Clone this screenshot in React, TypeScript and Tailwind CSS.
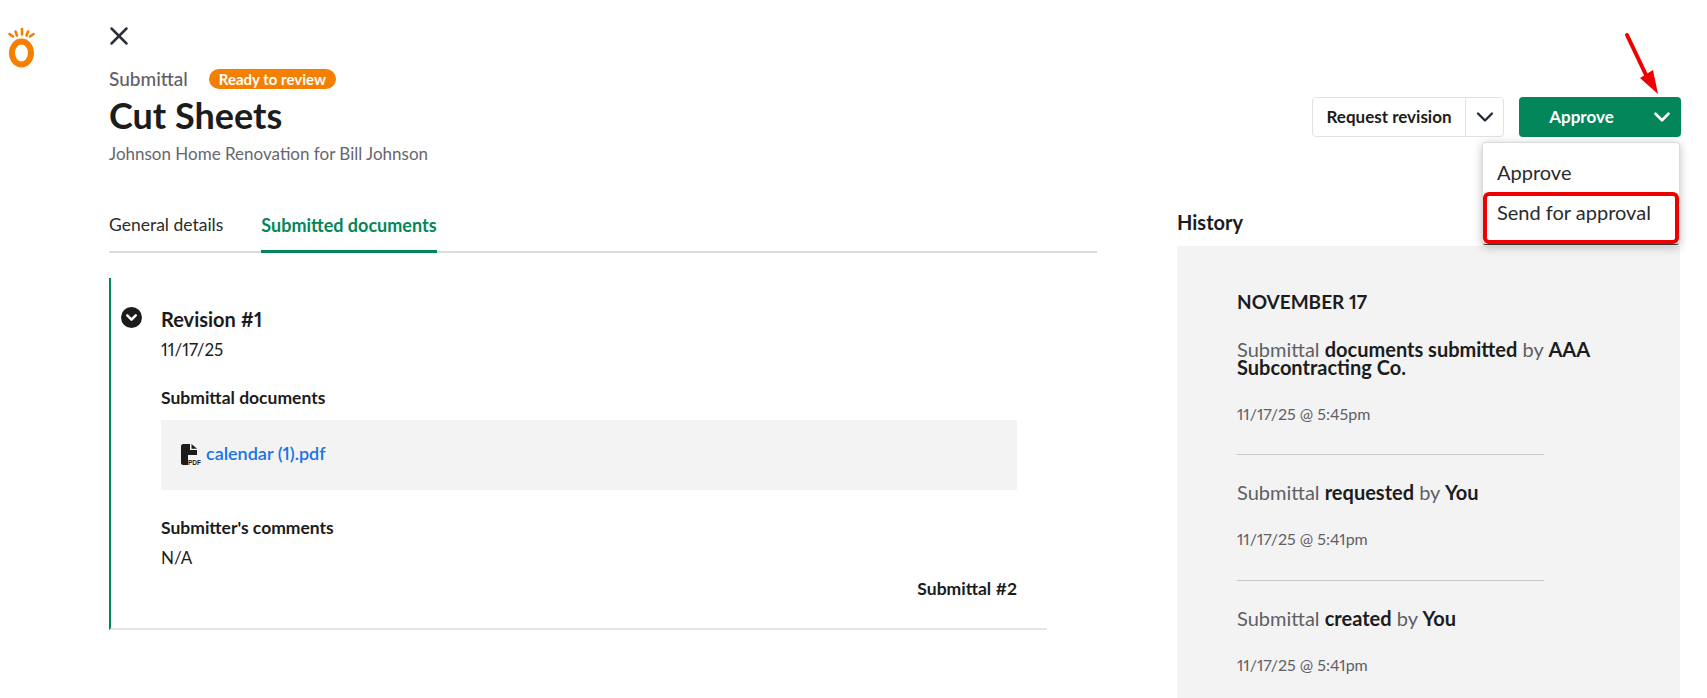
import { ChevronDown, X } from "lucide-react";

function Logo() {
  return (
    <svg width="28" height="42" viewBox="0 0 28 42" fill="none">
      <g stroke="#f57f00" strokeWidth="2.6" strokeLinecap="round">
        <path d="M14 3V8.5" />
        <path d="M7.5 5.5L9 9.5" />
        <path d="M20 5.5L18.5 9.5" />
        <path d="M1.5 8L5 10.5" />
        <path d="M25.5 8L22 10.5" />
      </g>
      <ellipse cx="13.5" cy="27" rx="9.5" ry="11.5" stroke="#f57f00" strokeWidth="6" />
    </svg>
  );
}

function PdfIcon() {
  return (
    <svg width="21" height="22" viewBox="0 0 21 22">
      <path d="M2 0H9V6H16V11H7V21H2C1 21 0 20 0 19V2C0 1 1 0 2 0Z" fill="#1c1c1c" />
      <path d="M10.5 0L16 4.8H10.5Z" fill="#1c1c1c" />
      <text x="7" y="20.5" fontSize="6.5" fontWeight="700" fill="#1c1c1c" fontFamily="Liberation Sans, sans-serif">PDF</text>
    </svg>
  );
}

function HistoryItem({ children, time, last, tall }: { children: React.ReactNode; time: string; last?: boolean; tall?: boolean }) {
  return (
    <div className={last ? "pb-6" : tall ? "pb-[32px] mb-[28px] relative" : "pb-[31px] mb-[28px] relative"}>
      <p className="w-[370px] text-[20px] leading-[18px] text-[#5f5f66]">{children}</p>
      <p className="text-[16px] leading-[20px] text-[#5f5f66] mt-[28px]">{time}</p>
      {!last && <div className="absolute bottom-0 left-0 w-[307px] border-b border-[#c9c9c9]" />}
    </div>
  );
}

export default function App() {
  return (
    <div className="relative flex h-[698px] w-full overflow-hidden bg-white text-[#1c1c1c] font-['Lato',sans-serif] proportional-nums">
      <aside className="w-[109px] shrink-0 pl-2 pt-[26px]">
        <Logo />
      </aside>

      <main className="flex-1 min-w-0">
        <div className="flex items-start justify-between pr-[26px]">
          <div>
            <X size={30} strokeWidth={2} className="mt-[21px] -ml-[5px] text-[#2b3138]" />
            <div className="flex items-center mt-[15px] h-[26px]">
              <span className="text-[19px] font-medium text-[#5f5f66]">Submittal</span>
              <span className="ml-[21px] flex h-5 w-[127px] items-center justify-center rounded-full bg-[#f57f00] text-[15px] font-bold text-white">
                Ready to review
              </span>
            </div>
            <h1 className="text-[36px] leading-[40px] font-bold mt-[3px]">Cut Sheets</h1>
            <p className="text-[17px] leading-[20px] text-[#66666d] mt-[9px]">Johnson Home Renovation for Bill Johnson</p>
          </div>

          <div className="flex gap-[15px] mt-[97px]">
            <div className="flex h-10 w-[192px] rounded border border-[#e2e2e2] bg-white">
              <span className="flex-1 flex items-center justify-center text-[17px] font-bold">Request revision</span>
              <span className="flex w-[38px] items-center justify-center border-l border-[#e2e2e2]">
                <ChevronDown size={28} strokeWidth={2} className="text-[#1f2a37]" />
              </span>
            </div>
            <div className="flex h-10 w-[162px] items-center rounded bg-[#03865a] text-white">
              <span className="flex-1 pr-[5px] text-center text-[17px] font-bold">Approve</span>
              <ChevronDown size={26} strokeWidth={2.4} className="mr-[6px]" />
            </div>
          </div>
        </div>

        <div className="flex mt-[46px]">
          <div className="w-[988px] shrink-0">
            <div className="flex gap-[38px] border-b-2 border-[#dcdcdc] h-[43px]">
              <span className="text-[17.5px] leading-[30px] text-[#2b2b2b]">General details</span>
              <span className="h-[43px] border-b-[3px] border-[#03865a] text-[18px] leading-[30px] font-bold text-[#03865a]">
                Submitted documents
              </span>
            </div>

            <div className="mt-[25px] flex w-[938px] border-l-2 border-b-2 border-l-[#03865a] border-b-[#e4e4e4] h-[352px]">
              <div className="w-[50px] shrink-0 pl-[10px] pt-[29px]">
                <span className="flex h-[21px] w-[21px] items-center justify-center rounded-full bg-[#1c1c1c]">
                  <ChevronDown size={17} strokeWidth={3.5} className="text-white" />
                </span>
              </div>
              <div className="w-[856px] shrink-0 pt-[29px]">
                <h2 className="text-[20px] leading-[24px] font-bold">Revision #1</h2>
                <p className="text-[17px] leading-[20px] mt-[9px]">11/17/25</p>
                <h3 className="text-[17.5px] leading-[20px] font-bold mt-[28px]">Submittal documents</h3>
                <div className="mt-[12px] flex h-[70px] items-center gap-[4px] bg-[#f3f3f3] pl-[20px]">
                  <PdfIcon />
                  <a className="-mt-[4px] text-[18px] font-semibold text-[#1a73e8]">calendar (1).pdf</a>
                </div>
                <h3 className="text-[17.5px] leading-[20px] font-bold mt-[28px]">Submitter's comments</h3>
                <p className="text-[17px] leading-[20px] mt-[10px]">N/A</p>
                <p className="text-right text-[17.5px] leading-[20px] font-bold mt-[11px]">Submittal #2</p>
              </div>
            </div>
          </div>

          <div className="ml-[80px] w-[503px] shrink-0">
            <h2 className="text-[20px] leading-[24px] font-bold">History</h2>
            <div className="mt-[12px] h-[500px] bg-[#f3f3f3] pl-[60px] pt-[46px] pr-[60px]">
              <h3 className="text-[19px] leading-[20px] font-bold mb-[28px]">NOVEMBER 17</h3>
              <HistoryItem time="11/17/25 @ 5:45pm">
                Submittal <b className="text-[#1c1c1c]">documents submitted</b> by <b className="text-[#1c1c1c]">AAA Subcontracting Co.</b>
              </HistoryItem>
              <HistoryItem time="11/17/25 @ 5:41pm" tall>
                Submittal <b className="text-[#1c1c1c]">requested</b> by <b className="text-[#1c1c1c]">You</b>
              </HistoryItem>
              <HistoryItem time="11/17/25 @ 5:41pm" last>
                Submittal <b className="text-[#1c1c1c]">created</b> by <b className="text-[#1c1c1c]">You</b>
              </HistoryItem>
            </div>
          </div>
        </div>
      </main>

      {/* dropdown */}
      <div className="absolute left-[1482px] top-[142px] w-[198px] h-[103px] rounded border border-[#dcdcdc] border-b-[#333] bg-white shadow-[0_2px_10px_rgba(0,0,0,0.25)] text-[20px] text-[#2b2b2b]">
        <div className="pl-[14px] pt-[17px] leading-[24px]">Approve</div>
        <div className="absolute left-0 top-[49px] w-[196px] h-[52px] rounded-md border-[4px] border-[#ee0000] pl-[10px] pt-[4px] leading-[24px]">
          Send for approval
        </div>
      </div>

      {/* annotation arrow */}
      <svg className="absolute left-[1620px] top-[30px]" width="50" height="70" viewBox="0 0 50 70">
        <path d="M7 5L27 47" stroke="#ee0000" strokeWidth="4" strokeLinecap="round" />
        <path d="M38 64L33 40L20 48Z" fill="#ee0000" />
      </svg>
    </div>
  );
}
